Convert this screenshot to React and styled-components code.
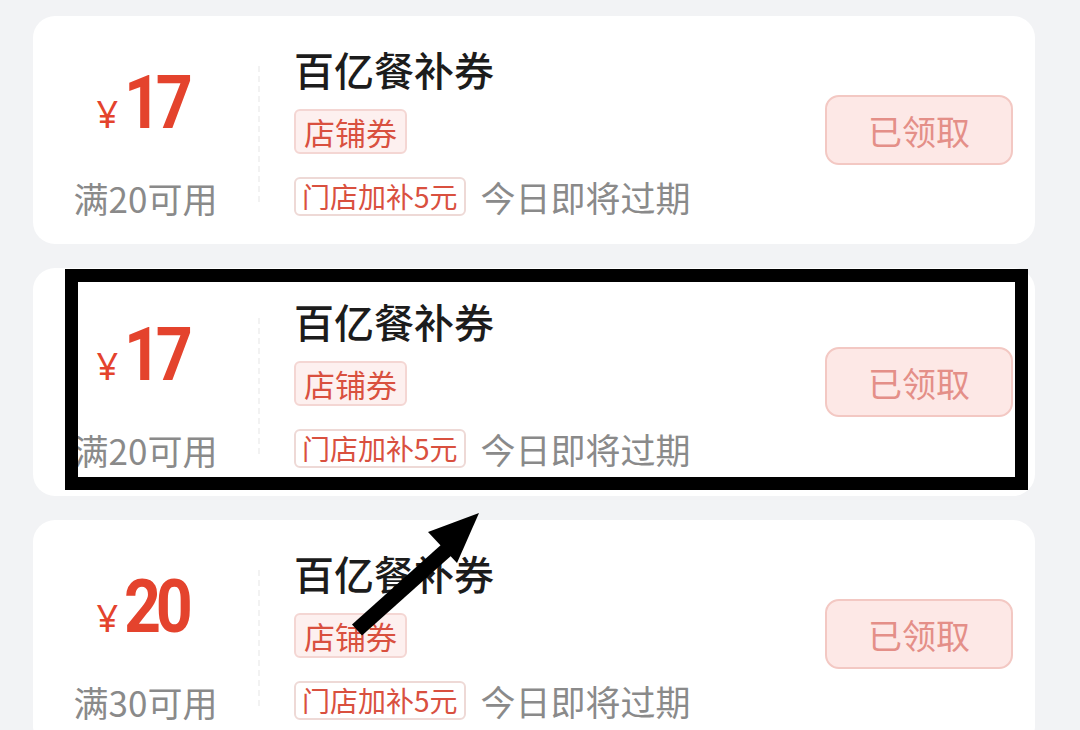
import styled, { createGlobalStyle } from 'styled-components';

const GlobalStyle = createGlobalStyle`
  html, body {
    margin: 0;
    padding: 0;
    background: #f2f3f5;
    height: 730px;
    overflow: hidden;
  }
  body {
    font-family: "Noto Sans CJK SC", "Noto Sans", sans-serif;
  }
`;

const Page = styled.div`
  position: relative;
  display: flex;
  flex-direction: column;
  gap: 24px;
  padding: 16px 0 0 33px;
  width: 1002px;
`;

const Card = styled.div`
  display: flex;
  align-items: center;
  height: 228px;
  background: #fff;
  border-radius: 22px;
  box-sizing: border-box;
`;

const Amount = styled.div`
  width: 225px;
  align-self: stretch;
  display: flex;
  flex-direction: column;
  align-items: center;
  padding-top: 40px;
  box-sizing: border-box;
`;

const Price = styled.div`
  display: flex;
  align-items: baseline;
  color: #e4432d;
  height: 92px;
  margin-left: -4px;
`;

const Yen = styled.span`
  font-family: "Noto Sans", sans-serif;
  font-size: 38px;
  font-weight: 400;
  margin-right: 6px;
`;

const Value = styled.span`
  display: inline-block;
  font-family: Roboto, "Noto Sans", sans-serif;
  font-size: 75px;
  font-weight: 700;
  line-height: 92px;
  letter-spacing: -6px;
  transform: scaleX(0.86);
  transform-origin: left center;
  margin-right: -8px;
`;

const Condition = styled.div`
  margin-top: 30px;
  font-size: 35px;
  color: #8a8a8a;
  line-height: 40px;
`;

const Divider = styled.div`
  align-self: stretch;
  margin: 50px 0 42px;
  border-left: 2px dashed #f2f2f2;
`;

const Info = styled.div`
  flex: 1;
  display: flex;
  flex-direction: column;
  align-items: flex-start;
  padding-left: 34px;
  padding-top: 6px;
`;

const Title = styled.div`
  font-size: 40px;
  line-height: 48px;
  color: #1c1c1c;
  font-weight: 500;
  margin-bottom: 16px;
`;

const Tag = styled.span`
  display: inline-flex;
  align-items: center;
  box-sizing: border-box;
  height: ${(p) => (p.$filled ? '45px' : '39px')};
  padding: 0 ${(p) => (p.$filled ? '8px' : '6px')};
  font-size: ${(p) => (p.$filled ? '31px' : '28px')};
  color: #d9503f;
  background: ${(p) => (p.$filled ? '#fdf0ef' : '#fff')};
  border: 2px solid ${(p) => (p.$filled ? '#f4d6d3' : '#eed9d6')};
  border-radius: 6px;
`;

const Row = styled.div`
  display: flex;
  align-items: center;
  gap: 15px;
  margin-top: 17px;
`;

const Expire = styled.span`
  font-size: 35px;
  color: #8a8a8a;
`;

const Claimed = styled.button`
  margin-right: 22px;
  width: 188px;
  height: 70px;
  border-radius: 14px;
  background: #fde8e6;
  border: 2px solid #f3c8c3;
  color: #e48f88;
  font-family: "Noto Sans CJK SC", sans-serif;
  font-size: 34px;
  padding: 0;
`;

const Highlight = styled.div`
  position: absolute;
  left: 65px;
  top: 269px;
  width: 963px;
  height: 221px;
  border: 13px solid #000;
  box-sizing: border-box;
  pointer-events: none;
`;

const Arrow = styled.svg`
  position: absolute;
  left: 340px;
  top: 500px;
  pointer-events: none;
`;

const coupons = [
  { value: '17', min: '20' },
  { value: '17', min: '20' },
  { value: '20', min: '30' },
];

function Coupon({ value, min }) {
  return (
    <Card>
      <Amount>
        <Price>
          <Yen>¥</Yen>
          <Value>{value}</Value>
        </Price>
        <Condition>满{min}可用</Condition>
      </Amount>
      <Divider />
      <Info>
        <Title>百亿餐补券</Title>
        <Tag $filled>店铺券</Tag>
        <Row>
          <Tag>门店加补5元</Tag>
          <Expire>今日即将过期</Expire>
        </Row>
      </Info>
      <Claimed>已领取</Claimed>
    </Card>
  );
}

export default function App() {
  return (
    <>
      <GlobalStyle />
      <Page>
        {coupons.map((c, i) => (
          <Coupon key={i} {...c} />
        ))}
        <Highlight />
        <Arrow width="160" height="150" viewBox="0 0 160 150">
          <line x1="17" y1="130" x2="112" y2="45" stroke="#000" strokeWidth="15" strokeLinecap="butt" />
          <polygon points="139,13 88,32 117,63" fill="#000" />
        </Arrow>
      </Page>
    </>
  );
}
